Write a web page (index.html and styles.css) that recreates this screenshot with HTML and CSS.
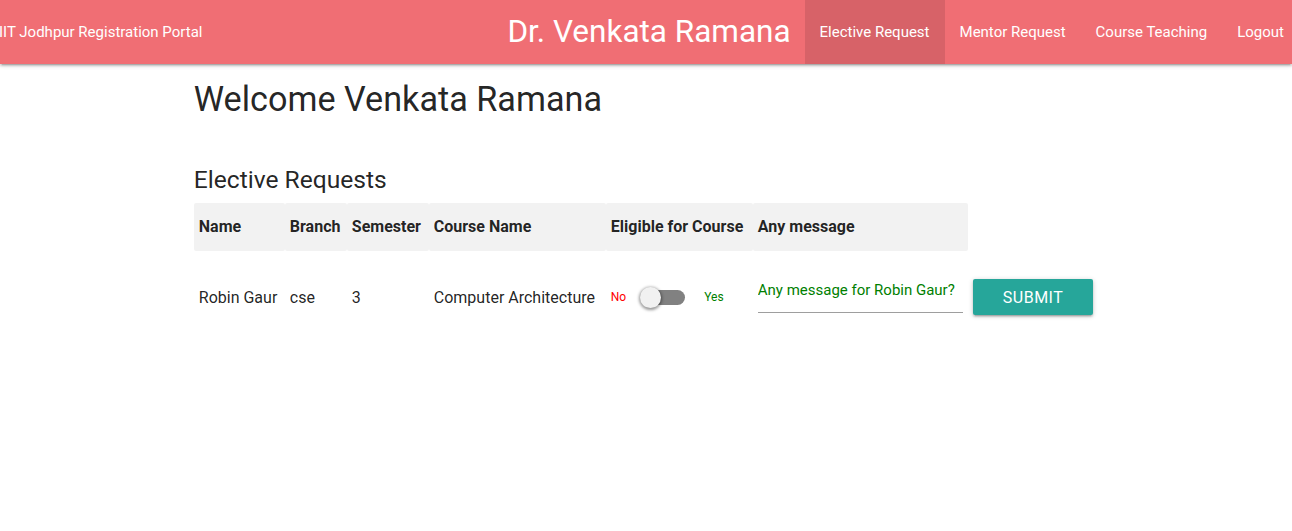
FILE: index.html
```html
<!DOCTYPE html>
<html lang="en">
<head>
<meta charset="utf-8">
<title>IIT Jodhpur Registration Portal</title>
<link rel="stylesheet" href="styles.css">
</head>
<body>
<nav class="navbar">
  <div class="nav-wrapper">
    <div class="portal-name">IIT Jodhpur Registration Portal</div>
    <a class="brand-logo" href="#">Dr. Venkata Ramana</a>
    <ul class="nav-links">
      <li class="active"><a href="#">Elective Request</a></li>
      <li><a href="#">Mentor Request</a></li>
      <li><a href="#">Course Teaching</a></li>
      <li><a href="#">Logout</a></li>
    </ul>
  </div>
</nav>
<main class="container">
  <h3 class="welcome">Welcome Venkata Ramana</h3>
  <h5 class="section-title">Elective Requests</h5>
  <table class="requests">
    <colgroup>
      <col class="c-name"><col class="c-branch"><col class="c-sem"><col class="c-course"><col class="c-elig"><col class="c-msg"><col class="c-btn">
    </colgroup>
    <thead>
      <tr>
        <th>Name</th>
        <th>Branch</th>
        <th>Semester</th>
        <th>Course Name</th>
        <th>Eligible for Course</th>
        <th>Any message</th>
      </tr>
    </thead>
    <tbody>
      <tr>
        <td>Robin Gaur</td>
        <td>cse</td>
        <td>3</td>
        <td>Computer Architecture</td>
        <td>
          <label class="switch">
            <span class="no">No</span>
            <input type="checkbox">
            <span class="lever"></span>
            <span class="yes">Yes</span>
          </label>
        </td>
        <td><input class="message" type="text" placeholder="Any message for Robin Gaur?"></td>
        <td><button class="btn" type="button">Submit</button></td>
      </tr>
    </tbody>
  </table>
</main>
</body>
</html>
```
FILE: styles.css
```css
html {
  font-family: Roboto, "Noto Sans", sans-serif;
  font-size: 15px;
  color: rgba(0, 0, 0, 0.87);
}

body {
  margin: 0;
  overflow-x: hidden;
}

.navbar {
  height: 64px;
  background-color: #f06e74;
  box-shadow: 0 2px 2px 0 rgba(0,0,0,0.14), 0 3px 1px -2px rgba(0,0,0,0.12), 0 1px 5px 0 rgba(0,0,0,0.2);
  overflow: hidden;
}

.nav-wrapper {
  width: calc(100% + 8px);
  margin-left: -1px;
  height: 64px;
  display: grid;
  grid-template-columns: 1fr auto 1fr;
  align-items: center;
  color: #fff;
}

.portal-name {
  font-size: 15px;
  line-height: 64px;
  white-space: nowrap;
}

.brand-logo {
  font-size: 31.5px;
  line-height: 64px;
  color: #fff;
  text-decoration: none;
  white-space: nowrap;
}

.nav-links {
  list-style: none;
  margin: 0;
  padding: 0;
  display: flex;
  justify-content: flex-end;
  height: 64px;
}

.nav-links a {
  display: block;
  padding: 0 15px;
  line-height: 64px;
  font-size: 15px;
  color: #fff;
  text-decoration: none;
  white-space: nowrap;
}

.nav-links .active {
  background-color: rgba(0, 0, 0, 0.1);
}

.container {
  width: 70%;
  margin: 0 auto;
}

.welcome {
  font-size: 34.2px;
  font-weight: 400;
  line-height: 44px;
  margin: 13px 0 0;
}

.section-title {
  font-size: 24.6px;
  font-weight: 400;
  line-height: 30px;
  margin: 44px 0 0;
}

.requests {
  width: 100%;
  table-layout: fixed;
  border-collapse: separate;
  border-spacing: 0;
  margin-top: 8px;
}

.c-name { width: 91px; }
.c-branch { width: 62px; }
.c-sem { width: 82px; }
.c-course { width: 177px; }
.c-elig { width: 147px; }
.c-msg { width: 215px; }
.c-btn { width: 131px; }

.requests th,
.requests td {
  padding: 15px 5px;
  text-align: left;
  vertical-align: middle;
  border-radius: 2px;
  white-space: nowrap;
}

.requests th {
  background-color: #f2f2f2;
  font-weight: 700;
  font-size: 16px;
  line-height: 18px;
}

.requests td {
  font-size: 16px;
}

.switch {
  display: flex;
  align-items: center;
  font-size: 12px;
  cursor: pointer;
}

.switch input {
  position: absolute;
  opacity: 0;
  width: 0;
  height: 0;
}

.switch .no { color: #ff0000; }
.switch .yes { color: #008000; }

.lever {
  position: relative;
  display: inline-block;
  width: 40px;
  height: 15px;
  margin: 0 19px 0 19px;
  background-color: #818181;
  border-radius: 15px;
}

.lever::after {
  content: "";
  position: absolute;
  left: -5px;
  top: -3px;
  width: 21px;
  height: 21px;
  border-radius: 50%;
  background-color: #f1f1f1;
  box-shadow: 0 1px 3px 1px rgba(0,0,0,0.4);
}

.message {
  display: block;
  width: 100%;
  box-sizing: border-box;
  height: 45px;
  margin: 2px 0 15px;
  padding: 0;
  border: none;
  border-bottom: 1px solid #9e9e9e;
  background: transparent;
  font-family: inherit;
  font-size: 15px;
  outline: none;
}

.message::placeholder {
  color: #008000;
  opacity: 1;
}

.btn {
  height: 36px;
  padding: 0 30px;
  border: none;
  border-radius: 2px;
  background-color: #26a69a;
  color: #fff;
  font-family: inherit;
  font-size: 16px;
  letter-spacing: 0.5px;
  text-transform: uppercase;
  box-shadow: 0 2px 2px 0 rgba(0,0,0,0.14), 0 3px 1px -2px rgba(0,0,0,0.12), 0 1px 5px 0 rgba(0,0,0,0.2);
  cursor: pointer;
}
```
